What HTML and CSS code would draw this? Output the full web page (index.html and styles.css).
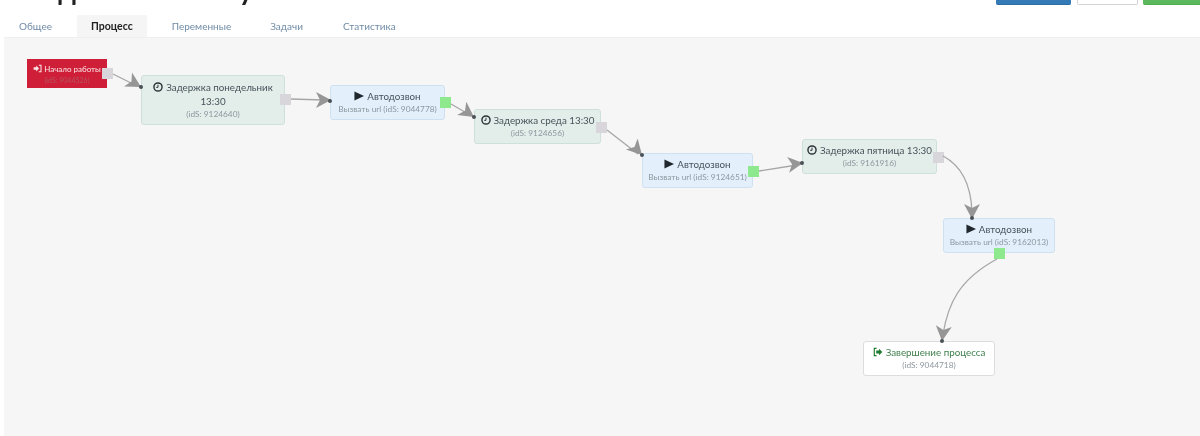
FILE: index.html
```html
<!DOCTYPE html>
<html lang="ru">
<head>
<meta charset="utf-8">
<title>Процесс</title>
<link rel="stylesheet" href="styles.css">
</head>
<body>
<header class="top">
  <h1 class="title">Задача по звонку</h1>
  <div class="actions">
    <span class="btn btn-blue"></span>
    <span class="btn btn-white"></span>
    <span class="btn btn-green"></span>
  </div>
</header>
<nav class="tabs">
  <a class="tab">Общее</a>
  <a class="tab active">Процесс</a>
  <a class="tab">Переменные</a>
  <a class="tab">Задачи</a>
  <a class="tab">Статистика</a>
</nav>
<main class="canvas">
  <svg class="wires" width="1196" height="399" viewBox="4 38 1196 399">
    <defs>
      <path id="arrow" d="M0 0 L-15 -8 L-11 0 L-15 8 Z" fill="#969696"/>
    </defs>
    <g class="wire">
      <path d="M113 74 L135 85"/>
      <path d="M291 99 L324 100"/>
      <path d="M451 104 L470 115"/>
      <path d="M607 130 L638 154"/>
      <path d="M759 171 L797 165"/>
      <path d="M943 156 C962 166 971 185 972 212"/>
      <path d="M997 259 C958 280 948 305 943 334"/>
    </g>
    <use href="#arrow" transform="translate(141 87) rotate(30)"/>
    <use href="#arrow" transform="translate(331 100) rotate(0)"/>
    <use href="#arrow" transform="translate(474 117) rotate(35)"/>
    <use href="#arrow" transform="translate(642 155) rotate(47)"/>
    <use href="#arrow" transform="translate(803 163) rotate(-7)"/>
    <use href="#arrow" transform="translate(972 219) rotate(90)"/>
    <use href="#arrow" transform="translate(942 341) rotate(97)"/>
    <g class="dots">
      <circle cx="141" cy="87" r="2"/>
      <circle cx="330" cy="101" r="2"/>
      <circle cx="474" cy="117" r="2"/>
      <circle cx="642" cy="155" r="2"/>
      <circle cx="802" cy="163" r="2"/>
      <circle cx="972" cy="218" r="2"/>
      <circle cx="942" cy="341" r="2"/>
    </g>
  </svg>

  <div class="node start n1">
    <div class="head"><svg class="ico" viewBox="0 0 14 14"><path d="M1 5h4V2.500L9.500 7 5 11.500V9H1z" fill="currentColor"/><path d="M9 2h3.500v10H9" fill="none" stroke="currentColor" stroke-width="1.600"/></svg>Начало работы</div>
    <div class="sub">(idS: 9044526)</div>
    <span class="port grey"></span>
  </div>

  <div class="node delay n2">
    <div class="head"><svg class="ico clock" viewBox="0 0 14 14"><circle cx="7" cy="7" r="5.700" fill="none" stroke="currentColor" stroke-width="2"/><path d="M7 3.800V7.500H4.500" fill="none" stroke="currentColor" stroke-width="1.400"/></svg>Задержка понедельник 13:30</div>
    <div class="sub">(idS: 9124640)</div>
    <span class="port grey"></span>
  </div>

  <div class="node call n3">
    <div class="head"><svg class="ico play" viewBox="0 0 12 12"><path d="M0.500 0.500 L12 6 L0.500 11.500 Z" fill="currentColor"/></svg>Автодозвон</div>
    <div class="sub">Вызвать url (idS: 9044778)</div>
    <span class="port green"></span>
  </div>

  <div class="node delay n4">
    <div class="head"><svg class="ico clock" viewBox="0 0 14 14"><circle cx="7" cy="7" r="5.700" fill="none" stroke="currentColor" stroke-width="2"/><path d="M7 3.800V7.500H4.500" fill="none" stroke="currentColor" stroke-width="1.400"/></svg>Задержка среда 13:30</div>
    <div class="sub">(idS: 9124656)</div>
    <span class="port grey"></span>
  </div>

  <div class="node call n5">
    <div class="head"><svg class="ico play" viewBox="0 0 12 12"><path d="M0.500 0.500 L12 6 L0.500 11.500 Z" fill="currentColor"/></svg>Автодозвон</div>
    <div class="sub">Вызвать url (idS: 9124651)</div>
    <span class="port green"></span>
  </div>

  <div class="node delay n6">
    <div class="head"><svg class="ico clock" viewBox="0 0 14 14"><circle cx="7" cy="7" r="5.700" fill="none" stroke="currentColor" stroke-width="2"/><path d="M7 3.800V7.500H4.500" fill="none" stroke="currentColor" stroke-width="1.400"/></svg>Задержка пятница 13:30</div>
    <div class="sub">(idS: 9161916)</div>
    <span class="port grey"></span>
  </div>

  <div class="node call n7">
    <div class="head"><svg class="ico play" viewBox="0 0 12 12"><path d="M0.500 0.500 L12 6 L0.500 11.500 Z" fill="currentColor"/></svg>Автодозвон</div>
    <div class="sub">Вызвать url (idS: 9162013)</div>
    <span class="port green"></span>
  </div>

  <div class="node end n8">
    <div class="head"><svg class="ico" viewBox="0 0 14 14"><path d="M5 2H1.800v10H5" fill="none" stroke="currentColor" stroke-width="1.600"/><path d="M4.500 5h4V2.500L13 7 8.500 11.500V9h-4z" fill="currentColor"/></svg>Завершение процесса</div>
    <div class="sub">(idS: 9044718)</div>
  </div>
</main>
</body>
</html>
```
FILE: styles.css
```css
* { box-sizing: border-box; }
html, body { margin: 0; padding: 0; }
body {
  width: 1200px;
  height: 436px;
  overflow: hidden;
  background: #fff;
  font-family: Lato, "Liberation Sans", sans-serif;
  color: #333;
  filter: blur(0.4px);
}
.top {
  height: 15px;
  display: flex;
  justify-content: space-between;
  align-items: flex-start;
  overflow: hidden;
}
.title {
  margin: -27px 0 0 28px;
  font-size: 28px;
  line-height: 32px;
  font-weight: 700;
  color: #222;
  white-space: nowrap;
}
.actions {
  display: flex;
  align-items: flex-start;
  margin-right: -2px;
}
.btn { display: block; height: 5px; border-radius: 0 0 2px 2px; }
.btn-blue { width: 75px; background: #337ab7; border-bottom: 1px solid #2e6da4; }
.btn-white { width: 61px; margin-left: 6px; background: #fff; border: 1px solid #d4d4d4; border-top: 0; }
.btn-green { width: 59px; margin-left: 5px; background: #5cb85c; border-bottom: 1px solid #4cae4c; }
.tabs {
  height: 22px;
  display: flex;
  padding-left: 4px;
  font-size: 10px;
  line-height: 22px;
}
.tab {
  padding: 0 15px;
  color: #6f8ba6;
  white-space: nowrap;
}
.tab:nth-child(2) { margin-left: 10px; padding: 0 14px; background: #f5f5f5; color: #222; font-weight: 700; font-size: 10.500px; }
.tab:nth-child(3) { margin-left: 10px; }
.tab:nth-child(4) { margin-left: 9px; }
.tab:nth-child(5) { margin-left: 10px; }
.canvas {
  position: relative;
  margin-left: 4px;
  width: 1196px;
  height: 399px;
  background: #f6f6f6;
  border-top: 1px solid #efefef;
}
.wires { position: absolute; left: 0; top: 0; overflow: visible; z-index: 1; pointer-events: none; }
.wire path { fill: none; stroke: #a6a6a6; stroke-width: 1.300; }
.dots circle { fill: #4a5257; }
.node {
  position: absolute;
  display: flex;
  flex-direction: column;
  align-items: center;
  justify-content: center;
  text-align: center;
  border-radius: 3px;
  border: 1px solid;
  padding: 2px;
}
.head { font-size: 9.800px; line-height: 14px; color: #465259; }
.sub { font-size: 8.300px; line-height: 13px; color: #8d979f; white-space: nowrap; }
.ico { width: 10px; height: 10px; margin-right: 3px; vertical-align: -1px; }
.play { color: #20282d; }
.clock { color: #2d3438; }
.port { position: absolute; width: 11px; height: 11px; }
.port.grey { background: #d8d6da; }
.port.green { background: #8ee88e; }
.delay { background: #e3eeea; border-color: #cfdfdb; }
.call { background: #e3f0fc; border-color: #cfe0f0; }
.start { background: #cf1f38; border: 0; border-radius: 0; }
.start .head { color: #fbe8ea; font-size: 8px; line-height: 12px; white-space: nowrap; }
.start .sub { color: #b5545f; font-size: 7px; line-height: 10px; }
.start .ico { width: 9px; height: 9px; margin-right: 2px; }
.end { background: #fff; border-color: #ddd; }
.end .head { color: #3f7f4d; }
.end .ico { color: #1e7a2c; }
.n1 { left: 23px; top: 21px; width: 80px; height: 29px; }
.n1 .port { left: 75px; top: 9px; }
.n2 { left: 137px; top: 37px; width: 144px; height: 50px; }
.n2 .port { left: 138px; top: 18px; }
.n3 { left: 326px; top: 47px; width: 115px; height: 35px; }
.n3 .port { left: 109px; top: 11px; }
.n4 { left: 470px; top: 71px; width: 127px; height: 35px; }
.n4 .port { left: 121px; top: 12px; }
.n5 { left: 638px; top: 115px; width: 111px; height: 35px; }
.n5 .port { left: 105px; top: 12px; }
.n6 { left: 798px; top: 101px; width: 135px; height: 35px; }
.n6 .port { left: 130px; top: 12px; }
.n7 { left: 939px; top: 180px; width: 112px; height: 35px; }
.n7 .port { left: 50px; top: 29px; }
.n8 { left: 859px; top: 303px; width: 132px; height: 35px; }
```
